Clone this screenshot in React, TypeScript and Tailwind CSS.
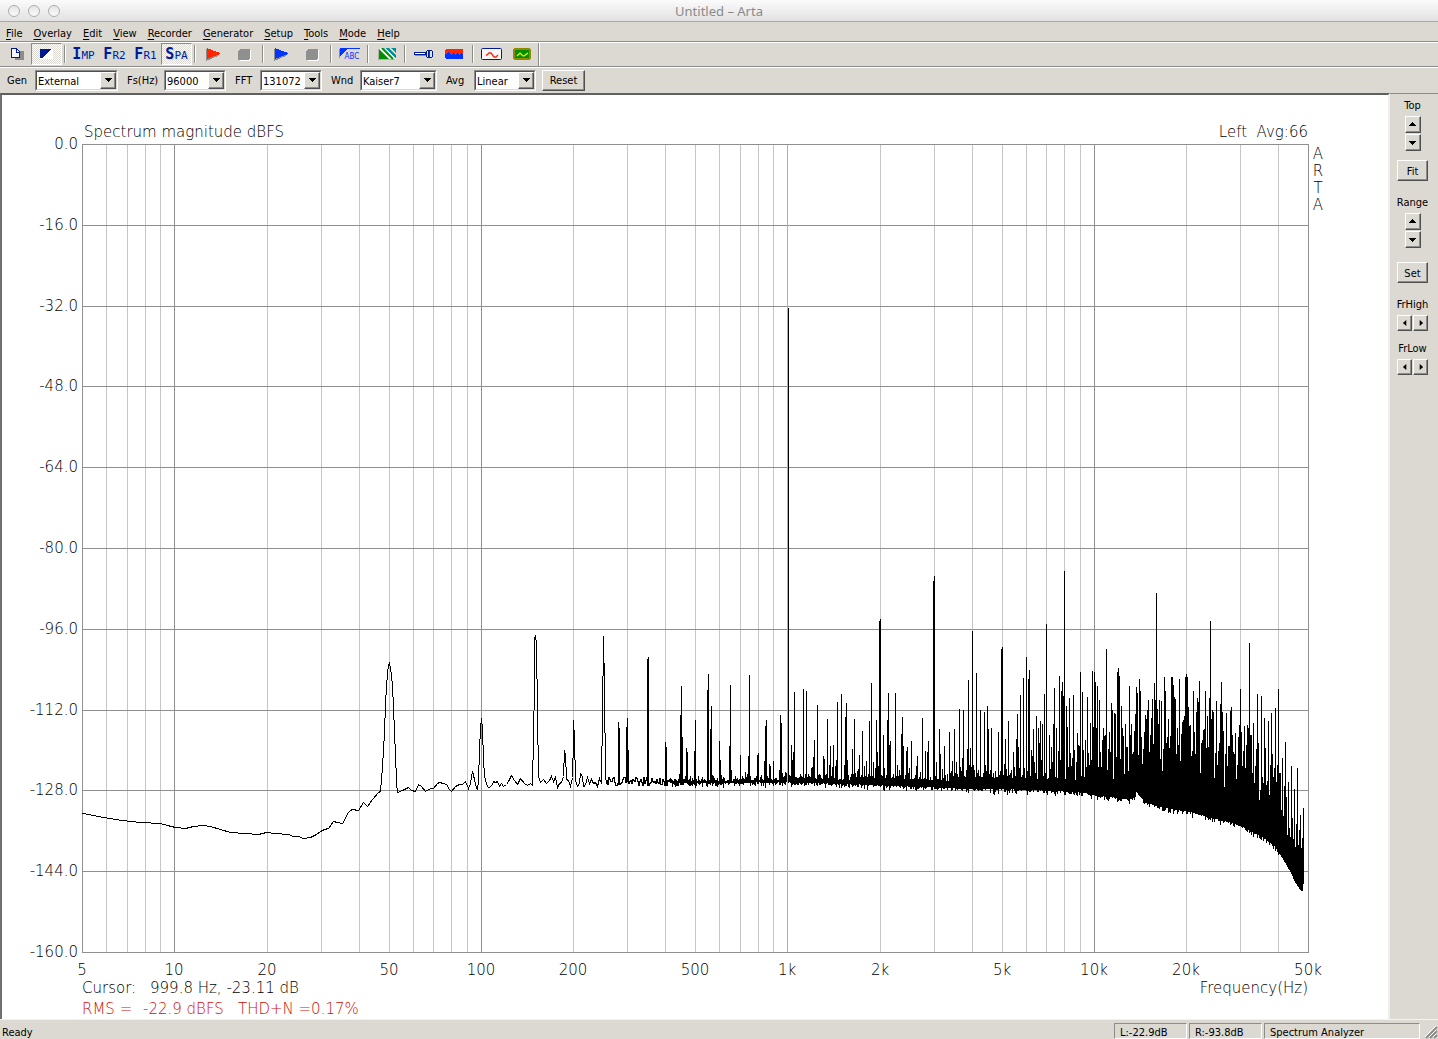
import type { ReactNode } from 'react';

const FACE = 'bg-[#dcd9d2]';
const RAISED =
  'bg-[#dcd9d2] border border-t-white border-l-white border-r-[#505050] border-b-[#505050] shadow-[inset_-1px_-1px_0_#8c8c8c]';
const CHECKER =
  'bg-[conic-gradient(#fff_25%,#dcd9d2_0_50%,#fff_0_75%,#dcd9d2_0)] bg-[length:2px_2px]';

/* ---------- spectrum data ---------- */

const PLOT = { left: 82, right: 1308, top: 144, bottom: 952 };
const DECADE = (PLOT.right - PLOT.left) / 4;

const freqX = (hz: number) => Math.round(PLOT.left + DECADE * Math.log10(hz / 5));
const dbY = (db: number) => Math.round(PLOT.top + (-db / 160) * (PLOT.bottom - PLOT.top));

const LOW_TRACE =
  '82,813 88,814 93,815 103,817 115,819 130,821 140,822 160,823 167,825 175,827 185,828 193,826 203,825 210,826 220,829 230,832 245,833 258,834 266,832 275,833 288,834 293,836 298,836 303,838 310,837 316,834 320,831 324,829 328,828 333,821 337,822 342,823 344,820 347,813 350,810 352,809 358,810 363,802 367,806 372,799 378,792 380,791 382,766 384,733 385,703 386,686 387,673 388,665 389,663 390,667 391,675 392,686 393,706 394,733 395,753 396,782 397,792 402,790 408,787 411,790 415,791 418,784 421,786 425,791 430,788 433,788 437,783 439,782 443,783 446,784 449,789 451,791 455,786 459,784 462,784 465,781 468,788 470,783 472,771 474,779 476,788 477,789 478,780 479,750 480,728 481,718 482,728 483,760 484,775 486,784 488,787 491,786 493,781 495,782 497,781 499,786 501,783 503,786 506,784 508,781 511,775 514,780 517,784 520,778 524,783 527,785 530,783 532,785 533,736 534,686 534,638 535,635 536,643 537,711 538,776 540,782 543,779 546,783 549,780 551,776 553,781 555,777 557,787 559,783 561,782 563,776 564,750 565,754 566,779 568,780 570,786 572,777 573,739 573,720 574,739 575,780 577,786 579,783 580,773 582,776 583,786 585,785 587,777 589,783 591,779 593,783 595,782 597,786 599,778 601,783 602,710 603,643 603,636 604,688 605,775 606,784';

// x position and peak of every line that stands out of the noise
const PEAKS: [number, number][] = [
  [618, 722], [619, 728], [626, 727], [627, 718], [628, 750], [647, 659], [648, 657], [665, 742], [666, 747],
  [680, 715], [681, 686], [682, 737], [686, 748], [687, 752], [694, 751], [695, 720], [707, 690], [708, 674],
  [710, 729], [711, 706], [719, 741], [720, 760], [729, 746], [730, 685], [731, 770], [740, 755], [745, 772],
  [748, 756], [749, 675], [757, 755], [758, 753], [764, 761], [765, 726], [766, 720], [769, 764], [770, 766],
  [773, 761], [779, 770], [780, 715], [781, 723], [785, 772], [788, 308], [791, 745], [792, 760], [793, 752],
  [794, 692], [803, 689], [806, 691], [811, 768], [812, 767], [813, 757], [814, 740], [817, 705], [823, 756],
  [824, 759], [827, 719], [829, 765], [830, 746], [832, 767], [833, 745], [835, 766], [836, 760], [837, 702],
  [841, 694], [844, 765], [845, 717], [846, 703], [847, 760], [852, 749], [854, 719], [857, 771], [859, 755],
  [862, 731], [864, 766], [866, 761], [869, 721], [871, 683], [873, 762], [875, 768], [876, 720], [877, 752],
  [878, 766], [879, 621], [880, 619], [883, 735], [884, 768], [887, 720], [888, 693], [889, 745], [890, 741],
  [895, 693], [897, 765], [899, 770], [901, 734], [902, 717], [903, 746], [906, 751], [907, 747], [909, 768],
  [911, 741], [916, 766], [917, 756], [922, 718], [925, 751], [927, 752], [928, 741], [933, 581], [934, 576],
  [936, 762], [939, 729], [940, 754], [942, 769], [944, 746], [949, 732], [952, 761], [954, 729], [956, 762],
  [959, 709], [960, 767], [962, 758], [963, 710], [966, 770], [967, 749], [968, 680], [969, 765], [970, 748],
  [971, 767], [972, 631], [973, 765], [974, 770], [976, 673], [978, 770], [980, 710], [984, 712], [985, 765],
  [987, 706], [988, 729], [991, 728], [995, 771], [998, 732], [1001, 649], [1002, 647], [1004, 764],
  [1005, 739], [1006, 769], [1008, 721], [1011, 770], [1013, 752], [1014, 767], [1016, 739], [1017, 714],
  [1018, 747], [1019, 768], [1020, 695], [1023, 678], [1024, 768], [1026, 657], [1027, 771], [1028, 679],
  [1029, 670], [1031, 750], [1032, 756], [1033, 729], [1034, 762], [1036, 716], [1038, 728], [1039, 743],
  [1040, 721], [1041, 760], [1042, 724], [1044, 694], [1046, 624], [1049, 735], [1050, 769], [1051, 747],
  [1052, 762], [1053, 724], [1054, 688], [1056, 728], [1058, 751], [1059, 676],
];

// one peak per column from here up to the end of the trace
const DENSE_START = 1060;
const DENSE = [
  760, 691, 682, 696, 571, 779, 706, 727, 767, 698, 753, 766, 758, 695, 750, 782, 762, 733, 745, 746, 672, 781,
  692, 750, 777, 740, 767, 697, 753, 765, 723, 760, 671, 727, 672, 682, 728, 686, 767, 700, 752, 767, 740, 728,
  736, 735, 649, 770, 749, 732, 752, 703, 710, 779, 713, 714, 757, 672, 668, 676, 759, 706, 728, 736, 774, 724,
  747, 747, 771, 686, 735, 724, 754, 752, 731, 714, 687, 693, 755, 679, 691, 737, 764, 749, 732, 715, 719, 710,
  700, 752, 735, 718, 699, 744, 683, 700, 593, 709, 724, 700, 759, 701, 771, 749, 677, 691, 743, 737, 719, 748,
  736, 677, 677, 685, 697, 699, 754, 728, 745, 679, 761, 734, 722, 720, 716, 677, 674, 677, 707, 726, 725, 756,
  751, 691, 732, 754, 712, 698, 702, 681, 773, 743, 740, 730, 729, 691, 748, 716, 747, 698, 621, 719, 710, 712,
  778, 753, 701, 765, 751, 743, 704, 682, 712, 731, 787, 754, 713, 766, 746, 746, 711, 707, 735, 752, 754, 733,
  779, 765, 737, 725, 689, 732, 766, 751, 726, 768, 745, 725, 728, 643, 735, 735, 773, 723, 783, 766, 749, 694,
  743, 800, 790, 696, 777, 783, 718, 748, 785, 781, 721, 795, 765, 713, 754, 777, 768, 708, 782, 765, 689, 773,
  773, 810, 758, 816, 786, 742, 797, 835, 782, 828, 837, 766, 818, 839, 789, 847, 824, 768, 845, 830, 815, 848,
  838, 808,
];

// lower edge of the noise band
const FLOOR: [number, number][] = [
  [606, 783], [700, 784], [788, 783], [850, 785], [900, 787], [950, 789], [1040, 791], [1080, 793], [1095, 796],
  [1120, 799], [1131, 800], [1134, 797], [1136, 792], [1138, 792], [1140, 798], [1147, 804], [1160, 808],
  [1185, 812], [1210, 818], [1225, 822], [1240, 826], [1250, 832], [1262, 837], [1275, 848], [1280, 856],
  [1286, 866], [1291, 875], [1295, 884], [1300, 891], [1302, 892], [1303, 885],
];

function floorAt(x: number) {
  const i = FLOOR.findIndex(([fx]) => fx >= x);
  if (i <= 0) return FLOOR[0][1];
  const [x0, y0] = FLOOR[i - 1];
  const [x1, y1] = FLOOR[i];
  return y0 + ((y1 - y0) * (x - x0)) / (x1 - x0);
}

function makeRandom(seed: number) {
  let s = seed;
  return () => {
    s = (s * 1664525 + 1013904223) % 4294967296;
    return s / 4294967296;
  };
}

function buildColumns() {
  const rnd = makeRandom(11);
  const peaks = new Map(PEAKS);
  DENSE.forEach((y, i) => peaks.set(DENSE_START + i, y));
  let d = '';
  let prev = 782;
  for (let x = 606; x <= 1303; x++) {
    const base = floorAt(x);
    const jitter = x < 1280 ? rnd() * rnd() * 6 : 0;
    let bottom = Math.round(base + jitter - 1);
    let top: number;
    if (x < 670) {
      // thin wandering line before the columns merge into a band
      const next = Math.round(781 + (rnd() - 0.5) * 9);
      top = Math.min(prev, next);
      bottom = Math.max(prev, next) + 1;
      prev = next;
    } else {
      const thick = x < 780 ? 3 : x < 850 ? 5 : x < 950 ? 8 : 12;
      top = Math.round(base - thick - rnd() * rnd() * (x < 780 ? 7 : 10));
    }
    const peak = peaks.get(x);
    if (peak !== undefined) top = Math.min(top, peak);
    d += `M${x} ${top}h1V${bottom}h-1z`;
  }
  return d;
}

const COLUMNS = buildColumns();

const MINOR = [6, 7, 8, 9, 20, 30, 40, 50, 60, 70, 80, 90, 200, 300, 400, 500, 600, 700, 800, 900, 2000, 3000, 4000, 5000, 6000, 7000, 8000, 9000, 20000, 30000, 40000];
const MAJOR = [5, 10, 100, 10000, 50000];
const X_LABELS: [number, string][] = [
  [5, '5'], [10, '10'], [20, '20'], [50, '50'], [100, '100'], [200, '200'], [500, '500'],
  [1000, '1k'], [2000, '2k'], [5000, '5k'], [10000, '10k'], [20000, '20k'], [50000, '50k'],
];
const DB_STEPS = [0, -16, -32, -48, -64, -80, -96, -112, -128, -144, -160];

function SpectrumPlot() {
  const height = PLOT.bottom - PLOT.top;
  return (
    <svg
      viewBox="2 95 1386 924"
      className="block w-full h-full font-extralight text-[15px] fill-black"
      style={{ fontFamily: '"DejaVu Sans Light", "DejaVu Sans", sans-serif' }}
      role="img"
      aria-label="Spectrum magnitude dBFS"
    >
      <g shapeRendering="crispEdges">
        {MINOR.map((f) => (
          <rect key={f} x={freqX(f)} y={PLOT.top} width="1" height={height} fill="#c6c6c6" />
        ))}
        {DB_STEPS.map((db) => (
          <rect key={db} x={PLOT.left} y={dbY(db)} width={PLOT.right - PLOT.left + 1} height="1" fill="#8f8f8f" />
        ))}
        {MAJOR.map((f) => (
          <rect key={f} x={freqX(f)} y={PLOT.top} width="1" height={height + 1} fill="#8f8f8f" />
        ))}
        <polyline points={LOW_TRACE} transform="translate(0.5 0.5)" fill="none" stroke="#000" strokeWidth="1" />
        <path d={COLUMNS} fill="#000" />
        <rect x="787" y={PLOT.top + 1} width="1" height={height - 1} fill="#c8c400" />
      </g>

      <text x="84" y="137">Spectrum magnitude dBFS</text>
      <text x="1308" y="137" textAnchor="end" xmlSpace="preserve">Left  Avg:66</text>
      {['A', 'R', 'T', 'A'].map((c, i) => (
        <text key={i} x="1318" y={159 + i * 17} textAnchor="middle">{c}</text>
      ))}
      {DB_STEPS.map((db) => (
        <text key={db} x="78" y={dbY(db) + 5} textAnchor="end">{db.toFixed(1)}</text>
      ))}
      {X_LABELS.map(([f, label]) => (
        <text key={f} x={freqX(f)} y="975" textAnchor="middle">{label}</text>
      ))}
      <text x="82" y="993">Cursor:</text>
      <text x="150" y="993">999.8 Hz, -23.11 dB</text>
      <text x="1308" y="993" textAnchor="end">Frequency(Hz)</text>
      <g fill="#d01000">
        <text x="82" y="1014">RMS =</text>
        <text x="143" y="1014">-22.9 dBFS</text>
        <text x="238" y="1014">THD+N =0.17%</text>
      </g>
    </svg>
  );
}

/* ---------- chrome ---------- */

function TitleBar() {
  return (
    <header className="relative flex h-[22px] shrink-0 items-center justify-center border-b border-[#a9a9a9] bg-gradient-to-b from-[#fbfbfb] to-[#e2e2e2]">
      <div className="absolute left-2 flex gap-2">
        {['Close', 'Minimize', 'Zoom'].map((name) => (
          <button
            key={name}
            type="button"
            aria-label={name}
            className="h-3 w-3 rounded-full border border-[#adadad] bg-gradient-to-b from-[#e6e6e6] to-[#fafafa]"
          />
        ))}
      </div>
      <h1 className="font-['Noto_Sans'] text-[13px] leading-4 text-[#8a8a8a]">Untitled – Arta</h1>
    </header>
  );
}

const MENUS = ['File', 'Overlay', 'Edit', 'View', 'Recorder', 'Generator', 'Setup', 'Tools', 'Mode', 'Help'];

function MenuBar() {
  return (
    <nav className="flex h-[19px] shrink-0 items-center gap-[11px] px-[6px] pt-1">
      {MENUS.map((m) => (
        <button key={m} type="button" className="leading-4">
          <span className="underline underline-offset-2">{m[0]}</span>
          {m.slice(1)}
        </button>
      ))}
    </nav>
  );
}

function ToolButton({ label, pressed, children }: { label: string; pressed?: boolean; children: ReactNode }) {
  return (
    <button
      type="button"
      aria-label={label}
      aria-pressed={pressed}
      className={`flex h-[22px] w-[31px] items-center justify-center ${
        pressed ? `${CHECKER} border border-t-[#8c8c8c] border-l-[#8c8c8c] border-r-white border-b-white` : ''
      }`}
    >
      {children}
    </button>
  );
}

function Sep() {
  return <div className="mr-[2px] ml-[2px] h-[18px] w-[2px] border-l border-l-[#8c8c8c] border-r border-r-white" />;
}

function ModeText({ big, small }: { big: string; small: string }) {
  return (
    <span className="flex items-baseline pt-[2px] font-['DejaVu_Sans_Mono'] leading-4 text-[#001a96] [text-shadow:1px_1px_0_#c3dcf2]">
      <span className="text-[15px] font-bold">{big}</span>
      <span className="text-[11px]">{small}</span>
    </span>
  );
}

function Play({ color }: { color: string }) {
  return (
    <svg width="16" height="14" shapeRendering="crispEdges" aria-hidden="true">
      <path d="M0 2v12l12-5v-2z" fill="#8c8c8c" />
      <path d="M1 1v11l13-5v-1z" fill={color} />
    </svg>
  );
}

function Stop() {
  return (
    <svg width="14" height="13" shapeRendering="crispEdges" aria-hidden="true">
      <path d="M3 2h10v9l-2 2H1l1-1z" fill="#fff" />
      <path d="M2 1h10v9l-2 2H0V3z" fill="#8f8f8f" />
    </svg>
  );
}

function Toolbar() {
  return (
    <div className="flex h-[25px] shrink-0 items-center border-t border-[#8c8c8c] shadow-[inset_0_1px_0_#fff]">
      <ToolButton label="Copy">
        <svg width="15" height="14" className="ml-[3px]" shapeRendering="crispEdges" aria-hidden="true">
          <path d="M5 4h9v9H5z" fill="#8c8c8c" />
          <path d="M1.5 1.5h5l3 3v6h-8z" fill="#f4f4ff" stroke="#001a96" />
          <path d="M6.5 1v4h3" fill="none" stroke="#001a96" />
        </svg>
      </ToolButton>
      <ToolButton label="Invert colors" pressed>
        <svg width="13" height="10" shapeRendering="crispEdges" aria-hidden="true">
          <path d="M0 0h13v10H0z" fill="#fff" />
          <path d="M0 0h11L7 4 4 8 2 9H0z" fill="#001a96" />
        </svg>
      </ToolButton>
      <Sep />
      <ToolButton label="Impulse"><ModeText big="I" small="MP" /></ToolButton>
      <ToolButton label="FR2"><ModeText big="F" small="R2" /></ToolButton>
      <ToolButton label="FR1"><ModeText big="F" small="R1" /></ToolButton>
      <ToolButton label="Spectrum" pressed><ModeText big="S" small="PA" /></ToolButton>
      <Sep />
      <ToolButton label="Record"><Play color="#ff2600" /></ToolButton>
      <ToolButton label="Stop recording"><Stop /></ToolButton>
      <Sep />
      <ToolButton label="Generate"><Play color="#0433ff" /></ToolButton>
      <ToolButton label="Stop generator"><Stop /></ToolButton>
      <Sep />
      <ToolButton label="ABC weighting">
        <span className="relative block h-[12px] w-[22px]">
          <svg width="22" height="12" shapeRendering="crispEdges" className="absolute inset-0" aria-hidden="true">
            <path d="M0 1h1v9H0z" fill="#8c8c8c" />
            <path d="M1 0h20v1H8L2 8H1z" fill="#0433ff" />
          </svg>
          <span className="absolute top-[4px] left-[6px] font-['DejaVu_Sans_Condensed'] text-[8px] leading-[9px] text-[#0433ff]">ABC</span>
        </span>
      </ToolButton>
      <Sep />
      <ToolButton label="Grid pattern">
        <svg width="18" height="12" aria-hidden="true">
          <path d="M1 1h16v10H1z" fill="#fff" />
          <path d="M1 1v10h10z" fill="#008f00" />
          <path d="M6 0h5l7 7v4z" fill="#009193" />
          <path d="M2 0l11 11M7 0l11 11" stroke="#fff" strokeWidth="1" />
          <path d="M4 0l11 11" stroke="#008f00" strokeWidth="2" />
          <path d="M13 0h5v5z" fill="#009193" />
          <path d="M0 1v11h17" fill="none" stroke="#8c8c8c" />
        </svg>
      </ToolButton>
      <Sep />
      <ToolButton label="Calibrate">
        <svg width="19" height="10" shapeRendering="crispEdges" aria-hidden="true">
          <path d="M1 6h11v1H1z" fill="#8c8c8c" />
          <path d="M0 3h12v3H0z" fill="#001a96" />
          <path d="M1 4h10v1H1z" fill="#fff" />
          <path d="M12 2l2-1h3l2 1v6l-2 1h-3l-2-1z" fill="#001a96" />
          <path d="M13 2h1v6h-1zM16 2h2v6h-2z" fill="#d6eaff" />
          <path d="M15 2h1v6h-1z" fill="#0433ff" />
        </svg>
      </ToolButton>
      <ToolButton label="Level">
        <svg width="19" height="10" shapeRendering="crispEdges" aria-hidden="true">
          <path d="M1 0h16l1 1v8l-1 1H1L0 9V1z" fill="#0433ff" />
          <path d="M1 0h16l1 1v4h-1V4h-1v1h-1v1h-1V5h-1V4h-1v1h-1v1h-1V5H9V4H8v1H7v1H6V5H5V4H4V3H3v1H2v1H0V1z" fill="#ff2600" />
        </svg>
      </ToolButton>
      <Sep />
      <ToolButton label="Signal scope">
        <svg width="22" height="13" aria-hidden="true">
          <rect x="0.5" y="0.5" width="20" height="11" rx="1" fill="#f6f6f6" stroke="#001a96" />
          <path d="M5 7h1l2-2h2l3 4h2l2-2" fill="none" stroke="#ff2600" strokeWidth="1.3" />
        </svg>
      </ToolButton>
      <ToolButton label="Oscilloscope">
        <svg width="19" height="13" aria-hidden="true">
          <path d="M2 1h14l1 1v8l-1 1H2l-1-1V2z" fill="#008f00" stroke="#8f8a00" strokeWidth="2" />
          <path d="M4 8l3-3 3 3h1l4-3" fill="none" stroke="#fffb00" strokeWidth="1.2" />
        </svg>
      </ToolButton>
      <div className="h-[23px] w-[2px] border-l border-l-[#8c8c8c] border-r border-r-white" />
    </div>
  );
}

function Combo({ id, label, value, labelClass, boxClass }: {
  id: string;
  label: string;
  value: string;
  labelClass: string;
  boxClass: string;
}) {
  return (
    <>
      <label htmlFor={id} className={`shrink-0 pt-[2px] leading-4 ${labelClass}`}>{label}</label>
      <div className={`relative h-[21px] border border-t-[#8c8c8c] border-l-[#8c8c8c] border-r-white border-b-white ${boxClass}`}>
        <select
          id={id}
          defaultValue={value}
          className="block h-full w-full appearance-none border border-t-[#505050] border-l-[#505050] border-r-[#dcd9d2] border-b-[#dcd9d2] bg-white pt-[2px] pl-px leading-4 outline-none"
        >
          <option>{value}</option>
        </select>
        <span className={`pointer-events-none absolute top-[1px] right-[1px] bottom-[1px] flex w-4 items-center justify-center ${RAISED}`}>
          <svg width="7" height="4" shapeRendering="crispEdges" aria-hidden="true"><path d="M0 0h7L3.5 4z" /></svg>
        </span>
      </div>
    </>
  );
}

function ControlBar() {
  return (
    <div className="flex h-[27px] shrink-0 items-center border-t border-[#8c8c8c] shadow-[inset_0_1px_0_#fff]">
      <Combo id="gen" label="Gen" value="External" labelClass="w-[35px] pl-[7px]" boxClass="w-[83px]" />
      <Combo id="fs" label="Fs(Hz)" value="96000" labelClass="w-[46px] pl-[9px]" boxClass="w-[62px]" />
      <Combo id="fft" label="FFT" value="131072" labelClass="w-[34px] pl-[9px]" boxClass="w-[62px]" />
      <Combo id="wnd" label="Wnd" value="Kaiser7" labelClass="w-[38px] pl-[9px]" boxClass="w-[77px]" />
      <Combo id="avg" label="Avg" value="Linear" labelClass="w-[37px] pl-[9px]" boxClass="w-[62px]" />
      <button type="button" className={`ml-[6px] h-[21px] w-[43px] pt-[2px] leading-4 ${RAISED}`}>Reset</button>
    </div>
  );
}

const ARROWS = {
  up: 'M0 5h7L3.5 1z',
  down: 'M0 2h7L3.5 6z',
  left: 'M5 0v7L1 3.5z',
  right: 'M2 0v7l4-3.5z',
};

function Arrow({ dir, label }: { dir: keyof typeof ARROWS; label: string }) {
  const size = dir === 'up' || dir === 'down' ? 'h-[17px] w-4' : 'h-4 w-[15px]';
  return (
    <button type="button" aria-label={label} className={`flex items-center justify-center ${size} ${RAISED}`}>
      {dir === 'up' || dir === 'down' ? (
        <svg width="7" height="7" shapeRendering="crispEdges" aria-hidden="true"><path d={ARROWS[dir]} /></svg>
      ) : (
        <svg width="6" height="6" viewBox="0 0 7 7" aria-hidden="true"><path d={ARROWS[dir]} /></svg>
      )}
    </button>
  );
}

function SidePanel() {
  return (
    <aside className="flex w-[48px] shrink-0 flex-col items-center border-t border-[#8c8c8c] pt-1 pr-[3px] leading-4">
      <div>Top</div>
      <div className="mt-[2px] flex flex-col gap-px">
        <Arrow dir="up" label="Top up" />
        <Arrow dir="down" label="Top down" />
      </div>
      <button type="button" className={`mt-[9px] h-[21px] w-[31px] pt-[2px] ${RAISED}`}>Fit</button>
      <div className="mt-[14px]">Range</div>
      <div className="mt-[2px] flex flex-col gap-px">
        <Arrow dir="up" label="Range up" />
        <Arrow dir="down" label="Range down" />
      </div>
      <button type="button" className={`mt-[14px] h-[21px] w-[31px] pt-[2px] ${RAISED}`}>Set</button>
      <div className="mt-[14px]">FrHigh</div>
      <div className="mt-[2px] flex gap-px">
        <Arrow dir="left" label="FrHigh down" />
        <Arrow dir="right" label="FrHigh up" />
      </div>
      <div className="mt-[10px]">FrLow</div>
      <div className="mt-[2px] flex gap-px">
        <Arrow dir="left" label="FrLow down" />
        <Arrow dir="right" label="FrLow up" />
      </div>
    </aside>
  );
}

function StatusBar() {
  const cell = 'h-full border border-t-[#8c8c8c] border-l-[#8c8c8c] border-r-white border-b-white pt-px pl-[5px] leading-4';
  return (
    <footer className="flex h-[20px] shrink-0 items-stretch gap-[2px] border-t border-[#f2f2f2] pt-[3px]">
      <div className="flex-1 pt-px pl-[2px] leading-[18px]">Ready</div>
      <div className={`w-[73px] ${cell}`}>L:-22.9dB</div>
      <div className={`w-[73px] ${cell}`}>R:-93.8dB</div>
      <div className={`w-[156px] ${cell}`}>Spectrum Analyzer</div>
      <svg width="16" height="16" aria-hidden="true">
        <path d="M4 15L15 4M8 15l7-7M12 15l3-3" stroke="#8c8c8c" strokeWidth="2" />
        <path d="M3 14L14 3M7 14l7-7M11 14l3-3" stroke="#fff" strokeWidth="1" />
      </svg>
    </footer>
  );
}

export default function App() {
  return (
    <div className={`flex h-screen flex-col overflow-hidden font-['DejaVu_Sans_Condensed','DejaVu_Sans',sans-serif] text-[11px] text-black ${FACE}`}>
      <TitleBar />
      <MenuBar />
      <Toolbar />
      <ControlBar />
      <div className="flex min-h-0 flex-1">
        <main className="min-w-0 flex-1 border-t-2 border-l-2 border-r-2 border-t-[#606060] border-l-[#707070] border-r-[#eeeeee] bg-white">
          <SpectrumPlot />
        </main>
        <SidePanel />
      </div>
      <StatusBar />
    </div>
  );
}
